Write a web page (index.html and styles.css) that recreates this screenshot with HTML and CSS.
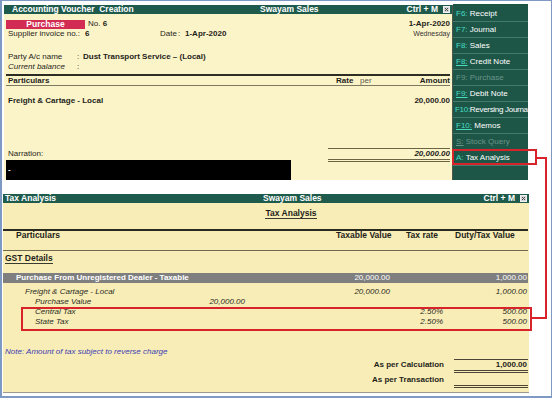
FILE: index.html
```html
<!DOCTYPE html>
<html lang="en">
<head>
    <meta charset="UTF-8">
    <meta name="viewport" content="width=device-width, initial-scale=1.0">
    <title>Tax Analysis</title>
    <link rel="stylesheet" href="styles.css">
</head>
<body>
    <div class="screen">
        <div class="top">
            <div class="voucher">
                <div class="titlebar">
                    <span class="tb-left">Accounting Voucher&nbsp; Creation</span>
                    <span class="tb-company">Swayam Sales</span>
                    <span class="tb-right">Ctrl + M
                        <svg class="close-box" width="7" height="7" viewBox="0 0 7 7"><rect x="0.5" y="0.5" width="6" height="6" fill="#d6d6d6" stroke="#f2f2f2"/><path d="M2 2l3 3M5 2l-3 3" stroke="#4a4a4a" stroke-width="1"/></svg>
                    </span>
                </div>
                <div class="voucher-body">
                    <div class="vch-top">
                        <div class="vch-left">
                            <div class="line"><span class="vch-type">Purchase</span><span class="vch-no">No. <b>6</b></span></div>
                            <div class="line pad"><span class="f-inv">Supplier invoice no.:</span><b class="f-invno">6</b><span class="f-date">Date</span><span class="f-colon">:</span><b>1-Apr-2020</b></div>
                        </div>
                        <div class="vch-right">
                            <div class="line"><b>1-Apr-2020</b></div>
                            <div class="line day">Wednesday</div>
                        </div>
                    </div>
                    <div class="party">
                        <div class="line pad"><span class="f-party">Party A/c name</span><span class="f-sep">:</span><b>Dust Transport Service – (Local)</b></div>
                        <div class="line short pad"><i class="f-party">Current balance</i><span class="f-sep">:</span></div>
                    </div>
                    <div class="vch-head">
                        <span class="c-part">Particulars</span>
                        <span class="c-rate">Rate</span>
                        <span class="c-per">per</span>
                        <span class="c-amt">Amount</span>
                    </div>
                    <div class="vch-entry">
                        <span class="c-part">Freight &amp; Cartage - Local</span>
                        <span class="c-amt">20,000.00</span>
                    </div>
                    <div class="filler"></div>
                    <div class="vch-bottom">
                        <div class="narration">
                            <div class="narr-label">Narration:</div>
                            <div class="narr-box">-</div>
                        </div>
                        <div class="vch-total">20,000.00</div>
                    </div>
                </div>
            </div>
            <div class="sidebar">
                <div class="side-item"><span class="key">F6:</span> Receipt</div>
                <div class="side-item"><span class="key">F7:</span> Journal</div>
                <div class="side-item"><span class="key">F8:</span> Sales</div>
                <div class="side-item"><span class="key ul">F8:</span> Credit Note</div>
                <div class="side-item off"><span class="key">F9:</span> Purchase</div>
                <div class="side-item"><span class="key ul">F9:</span> Debit Note</div>
                <div class="side-item tight"><span class="key">F10:</span>Reversing Journal</div>
                <div class="side-item"><span class="key ul">F10:</span> Memos</div>
                <div class="side-item off"><span class="key ul">S:</span> Stock Query</div>
                <div class="side-item"><span class="key">A:</span> Tax Analysis</div>
            </div>
        </div>

        <div class="analysis">
            <div class="titlebar">
                <span class="tb-left">Tax Analysis</span>
                <span class="tb-company">Swayam Sales</span>
                <span class="tb-right">Ctrl + M
                    <svg class="close-box" width="7" height="7" viewBox="0 0 7 7"><rect x="0.5" y="0.5" width="6" height="6" fill="#d6d6d6" stroke="#f2f2f2"/><path d="M2 2l3 3M5 2l-3 3" stroke="#4a4a4a" stroke-width="1"/></svg>
                </span>
            </div>
            <div class="analysis-body">
                <div class="an-heading"><span>Tax Analysis</span></div>
                <div class="an-row an-head">
                    <span class="h-part">Particulars</span>
                    <span class="h-col h-taxable">Taxable Value</span>
                    <span class="h-col h-rate">Tax rate</span>
                    <span class="h-col h-duty">Duty/Tax Value</span>
                </div>
                <div class="gst"><span>GST Details</span></div>
                <div class="an-row band">
                    <span class="b-part">Purchase From Unregistered Dealer - Taxable</span>
                    <span class="num">20,000.00</span>
                    <span class="num"></span>
                    <span class="num">1,000.00</span>
                </div>
                <div class="an-lines">
                    <div class="an-row">
                        <span class="l1">Freight &amp; Cartage - Local</span>
                        <span class="num">20,000.00</span>
                        <span class="num"></span>
                        <span class="num">1,000.00</span>
                    </div>
                    <div class="an-row">
                        <span class="l2 sub"><span>Purchase Value</span><span>20,000.00</span></span>
                        <span class="num"></span>
                        <span class="num"></span>
                        <span class="num"></span>
                    </div>
                    <div class="an-row">
                        <span class="l2">Central Tax</span>
                        <span class="num"></span>
                        <span class="num">2.50%</span>
                        <span class="num">500.00</span>
                    </div>
                    <div class="an-row">
                        <span class="l2">State Tax</span>
                        <span class="num"></span>
                        <span class="num">2.50%</span>
                        <span class="num">500.00</span>
                    </div>
                </div>
                <div class="note">Note: Amount of tax subject to reverse charge</div>
                <div class="calc-row first">
                    <span class="lbl">As per Calculation</span>
                    <span class="amt">1,000.00</span>
                </div>
                <div class="calc-row second">
                    <span class="lbl">As per Transaction</span>
                    <span class="amt">&nbsp;</span>
                </div>
            </div>
        </div>
    </div>

    <!-- callout marks drawn over the screenshot -->
    <div class="mark box-menu"></div>
    <div class="mark line-a"></div>
    <div class="mark line-b"></div>
    <div class="mark line-c"></div>
    <div class="mark box-rows"></div>
</body>
</html>
```

FILE: styles.css
```css
* {
    box-sizing: border-box;
}
body {
    margin: 0;
    font-family: "Liberation Sans", Arial, sans-serif;
    font-size: 8px;
    color: #1e1e1a;
    background-color: #ffffff;
}
.screen {
    width: 552px;
    height: 398px;
    border: 1px solid #7f9ac2;
    border-left-width: 2px;
    border-bottom-width: 2px;
    padding: 3px 0 0 2px;
}
.top {
    display: flex;
    height: 176px;
}
.voucher {
    width: 449px;
    margin-top: 1px;
    display: flex;
    flex-direction: column;
    background-color: #fcf4c9;
    border-right: 1px solid #4f5848;
}
.titlebar {
    display: flex;
    align-items: center;
    height: 9px;
    line-height: 9px;
    background-color: #1f5b4c;
    color: #ffffff;
    font-weight: bold;
    font-size: 8.5px;
    white-space: nowrap;
}
.voucher .tb-left {
    width: 256px;
    padding-left: 8px;
}
.tb-company {
    flex: 1;
}
.tb-right {
    display: flex;
    align-items: center;
    gap: 5px;
    padding-right: 2px;
}
.close-box {
    display: block;
}
.voucher-body {
    flex: 1;
    display: flex;
    flex-direction: column;
    padding: 0 2px;
}
.line {
    line-height: 10px;
    white-space: nowrap;
}
.line.short {
    line-height: 9px;
}
.pad {
    padding-left: 2px;
}
.vch-top {
    display: flex;
    justify-content: space-between;
    padding-top: 5px;
}
.vch-type {
    display: inline-block;
    width: 79px;
    height: 9px;
    line-height: 9px;
    margin-top: 1px;
    vertical-align: top;
    background-color: #d22c55;
    color: #ffffff;
    font-weight: bold;
    font-size: 8.5px;
    text-align: center;
}
.vch-no {
    margin-left: 3px;
}
.f-inv {
    display: inline-block;
    width: 77px;
}
.f-invno {
    display: inline-block;
    width: 75px;
}
.f-date {
    display: inline-block;
    width: 18px;
}
.f-colon {
    display: inline-block;
    width: 7px;
}
.vch-right {
    text-align: right;
}
.vch-right .day {
    font-size: 7px;
    line-height: 9px;
    color: #333;
}
.party {
    margin-top: 13px;
}
.f-party {
    display: inline-block;
    width: 69px;
}
.f-sep {
    display: inline-block;
    width: 6px;
}
.vch-head {
    display: flex;
    margin-top: 3px;
    line-height: 9px;
    border-top: 2px solid #2d2d24;
    border-bottom: 1px solid #7d7860;
    font-weight: bold;
}
.c-part {
    flex: 1;
    padding-left: 2px;
}
.c-rate {
    width: 24px;
}
.c-per {
    width: 30px;
    font-weight: normal;
    color: #5a5a50;
}
.c-amt {
    width: 60px;
    text-align: right;
}
.vch-entry {
    display: flex;
    margin-top: 10px;
    line-height: 10px;
    font-weight: bold;
}
.filler {
    flex: 1;
}
.vch-bottom {
    display: flex;
    justify-content: space-between;
    height: 32px;
}
.narr-label {
    padding: 1px 0 0 2px;
    line-height: 10px;
}
.narr-box {
    width: 285px;
    height: 20px;
    margin-top: 1px;
    padding-left: 2px;
    line-height: 20px;
    background-color: #000000;
    color: #ffffff;
    font-weight: bold;
}
.vch-total {
    width: 122px;
    height: 14px;
    line-height: 10px;
    text-align: right;
    font-weight: bold;
    font-style: italic;
    border-top: 1px solid #6b6545;
    border-bottom: 3px double #6b6545;
}
.sidebar {
    width: 75px;
    padding-top: 2px;
    background-color: #1d5647;
}
.side-item {
    height: 16px;
    line-height: 15px;
    padding-left: 3px;
    border-bottom: 1px solid #467a6c;
    color: #ffffff;
    white-space: nowrap;
    overflow: hidden;
}
.side-item.tight {
    padding-left: 2px;
    letter-spacing: -0.3px;
}
.side-item .key {
    color: #45dcc2;
}
.side-item .key.ul {
    text-decoration: underline;
}
.side-item.off,
.side-item.off .key {
    color: #6a958a;
}
.analysis {
    width: 526px;
    height: 199px;
    margin: 14px 0 0 -1px;
    display: flex;
    flex-direction: column;
    background-color: #f8edb6;
    border-bottom: 1px solid #9a9a90;
}
.analysis .tb-left {
    width: 260px;
    padding-left: 2px;
}
.analysis-body {
    flex: 1;
    padding-right: 1px;
}
.an-heading {
    padding: 5px 0 0 51px;
    text-align: center;
}
.an-heading span,
.gst span {
    display: inline-block;
    line-height: 10px;
    font-weight: bold;
    font-size: 8.5px;
    border-bottom: 1px solid #3a3a30;
}
.an-row {
    display: grid;
    grid-template-columns: 1fr 70px 53px 85px;
    line-height: 10px;
    white-space: nowrap;
}
.an-row .num {
    text-align: right;
}
.an-row .num:last-child {
    padding-right: 1px;
}
.an-head {
    height: 22px;
    margin-top: 10px;
    line-height: 9px;
    border-top: 2px solid #2a2a20;
    border-bottom: 1px solid #6f6a50;
    font-weight: bold;
    font-size: 8.5px;
}
.h-part {
    padding-left: 13px;
}
.h-taxable {
    padding-left: 16px;
}
.h-rate {
    padding-left: 16px;
}
.h-duty {
    padding-left: 12px;
}
.gst {
    margin-top: 2px;
    padding-left: 2px;
}
.band {
    height: 10px;
    margin-top: 9px;
    background-color: #7f7f7f;
    color: #ffffff;
}
.b-part {
    padding-left: 13px;
    font-weight: bold;
}
.an-lines {
    margin-top: 4px;
    font-style: italic;
    color: #2a2a24;
}
.l1 {
    padding-left: 22px;
}
.l2 {
    padding-left: 32px;
}
.sub {
    display: flex;
    justify-content: space-between;
    padding-right: 75px;
}
.note {
    margin-top: 20px;
    padding-left: 2px;
    line-height: 10px;
    font-style: italic;
    color: #3c3cb4;
}
.calc-row {
    display: grid;
    grid-template-columns: 1fr 74px;
    font-weight: bold;
}
.calc-row .lbl {
    padding-right: 10px;
    line-height: 10px;
    text-align: right;
}
.calc-row .amt {
    padding-right: 1px;
    line-height: 10px;
    text-align: right;
    border-bottom: 3px double #4a4535;
}
.calc-row.first {
    margin-top: 2px;
}
.calc-row.first .lbl {
    padding-top: 1px;
}
.calc-row.first .amt {
    border-top: 1px solid #4a4535;
}
.calc-row.second {
    margin-top: 2px;
}
.mark {
    position: absolute;
    background-color: #d8232a;
}
.box-menu,
.box-rows {
    background-color: transparent;
    border: 2px solid #d8232a;
}
.box-menu {
    left: 452px;
    top: 149px;
    width: 85px;
    height: 16px;
}
.line-a {
    left: 537px;
    top: 157px;
    width: 10px;
    height: 2px;
}
.line-b {
    left: 545px;
    top: 157px;
    width: 2px;
    height: 162px;
}
.line-c {
    left: 531px;
    top: 317px;
    width: 16px;
    height: 2px;
}
.box-rows {
    left: 21px;
    top: 307px;
    width: 511px;
    height: 24px;
}
```
